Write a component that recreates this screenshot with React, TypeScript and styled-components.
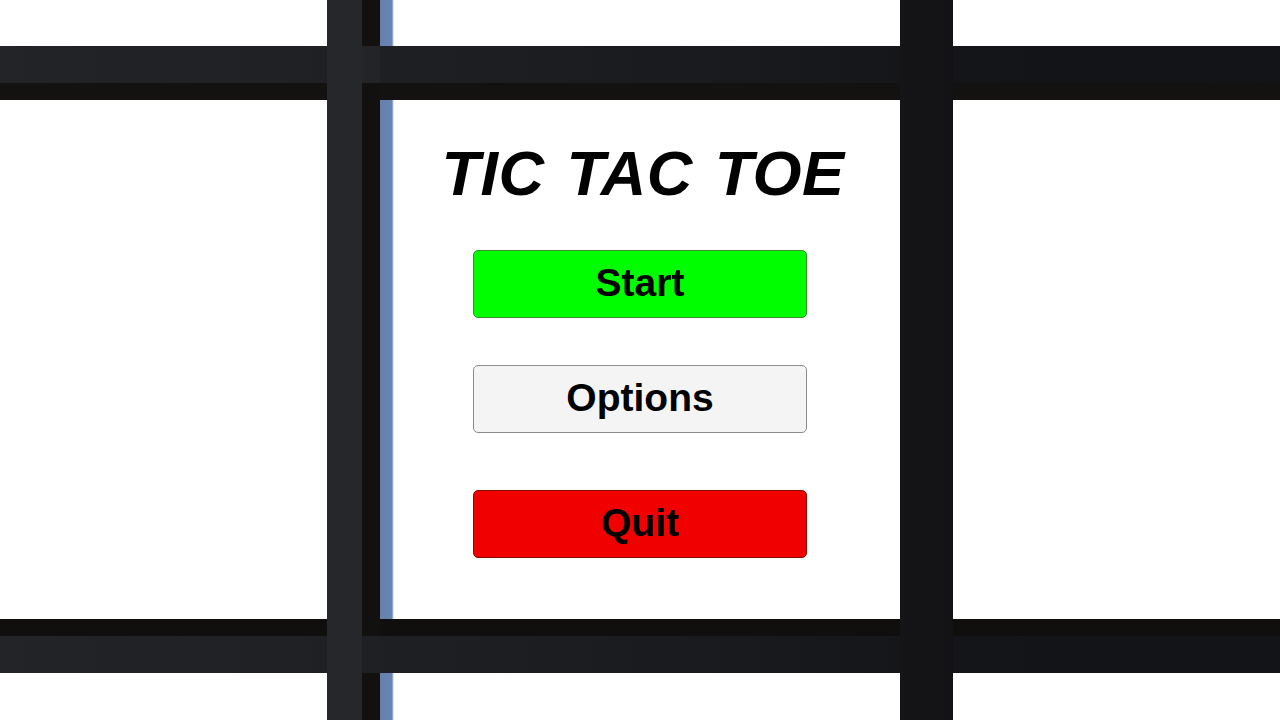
import React from "react";
import styled, { createGlobalStyle } from "styled-components";

const GlobalStyle = createGlobalStyle`
  html, body {
    margin: 0;
    padding: 0;
    background: #ffffff;
    overflow: hidden;
  }
  #root {
    width: 1280px;
    height: 720px;
  }
`;

// The 3x3 board: thick bars between cells, the middle cell holds the menu.
const Board = styled.div`
  display: grid;
  grid-template-columns: 327px 53px 520px 53px 1fr;
  grid-template-rows: 46px 54px 519px 54px 1fr;
  width: 1280px;
  height: 720px;
  background: #ffffff;
  font-family: "Liberation Sans", Arial, sans-serif;
  overflow: hidden;
`;

// Bluish bevel catching light along the left edge of the middle column.
const EdgeGlint = styled.div`
  grid-column: 3;
  grid-row: 1 / -1;
  width: 14px;
  background: linear-gradient(
    to right,
    #6680ad 0,
    #6b85b3 12px,
    #b9c9e3 13px,
    #ffffff 14px
  );
`;

const HBar = styled.div<{ $shadow: "top" | "bottom"; $row: number }>`
  grid-column: 1 / -1;
  grid-row: ${(p) => p.$row};
  z-index: 1;
  background: ${(p) =>
      p.$shadow === "bottom"
        ? "linear-gradient(to bottom, transparent 37px, #131210 37px)"
        : "linear-gradient(to bottom, #100f0d 17px, transparent 17px)"},
    linear-gradient(to right, #232428 0%, #1c1d21 45%, #141518 75%, #131417 100%);
`;

const LeftBar = styled.div`
  grid-column: 2;
  grid-row: 1 / -1;
  z-index: 2;
  background: linear-gradient(#232428, #232428) 35px 46px / 18px 37px no-repeat,
    linear-gradient(#1f2024, #1f2024) 35px 636px / 18px 37px no-repeat,
    linear-gradient(to right, #26272b 35px, #121110 35px);
`;

const RightBar = styled.div`
  grid-column: 4;
  grid-row: 1 / -1;
  z-index: 2;
  background: linear-gradient(to right, #151518, #141417 60%, #121215);
`;

const Menu = styled.div`
  grid-column: 3;
  grid-row: 3;
  display: flex;
  flex-direction: column;
  align-items: center;
  padding-top: 42px;
`;

const Title = styled.h1`
  margin: 0 0 0 6px;
  font-family: "Liberation Sans", Arial, sans-serif;
  font-size: 63px;
  font-weight: 700;
  font-style: italic;
  line-height: 1;
  letter-spacing: 0.5px;
  word-spacing: 4px;
  color: #000000;
  white-space: nowrap;
`;

type Tone = "go" | "neutral" | "stop";

const tones: Record<Tone, { bg: string; border: string }> = {
  go: { bg: "#00fe00", border: "#2f8f2f" },
  neutral: { bg: "#f4f4f4", border: "#8c8c8c" },
  stop: { bg: "#f10000", border: "#8e0b0b" },
};

const MenuButton = styled.button<{ $tone: Tone; $gap: number }>`
  box-sizing: border-box;
  width: 334px;
  height: 68px;
  margin-top: ${(p) => p.$gap}px;
  padding: 0 0 4px;
  display: flex;
  align-items: center;
  justify-content: center;
  border-radius: 5px;
  border: 1px solid ${(p) => tones[p.$tone].border};
  background: ${(p) => tones[p.$tone].bg};
  color: #000000;
  font-family: "Liberation Sans", Arial, sans-serif;
  font-size: 39px;
  font-weight: 700;
  line-height: 1;
  cursor: pointer;
`;

export default function App() {
  return (
    <>
      <GlobalStyle />
      <Board>
        <EdgeGlint />
        <HBar $row={2} $shadow="bottom" />
        <HBar $row={4} $shadow="top" />
        <LeftBar />
        <RightBar />
        <Menu>
          <Title>TIC TAC TOE</Title>
          <MenuButton $tone="go" $gap={45}>
            Start
          </MenuButton>
          <MenuButton $tone="neutral" $gap={47}>
            Options
          </MenuButton>
          <MenuButton $tone="stop" $gap={57}>
            Quit
          </MenuButton>
        </Menu>
      </Board>
    </>
  );
}
